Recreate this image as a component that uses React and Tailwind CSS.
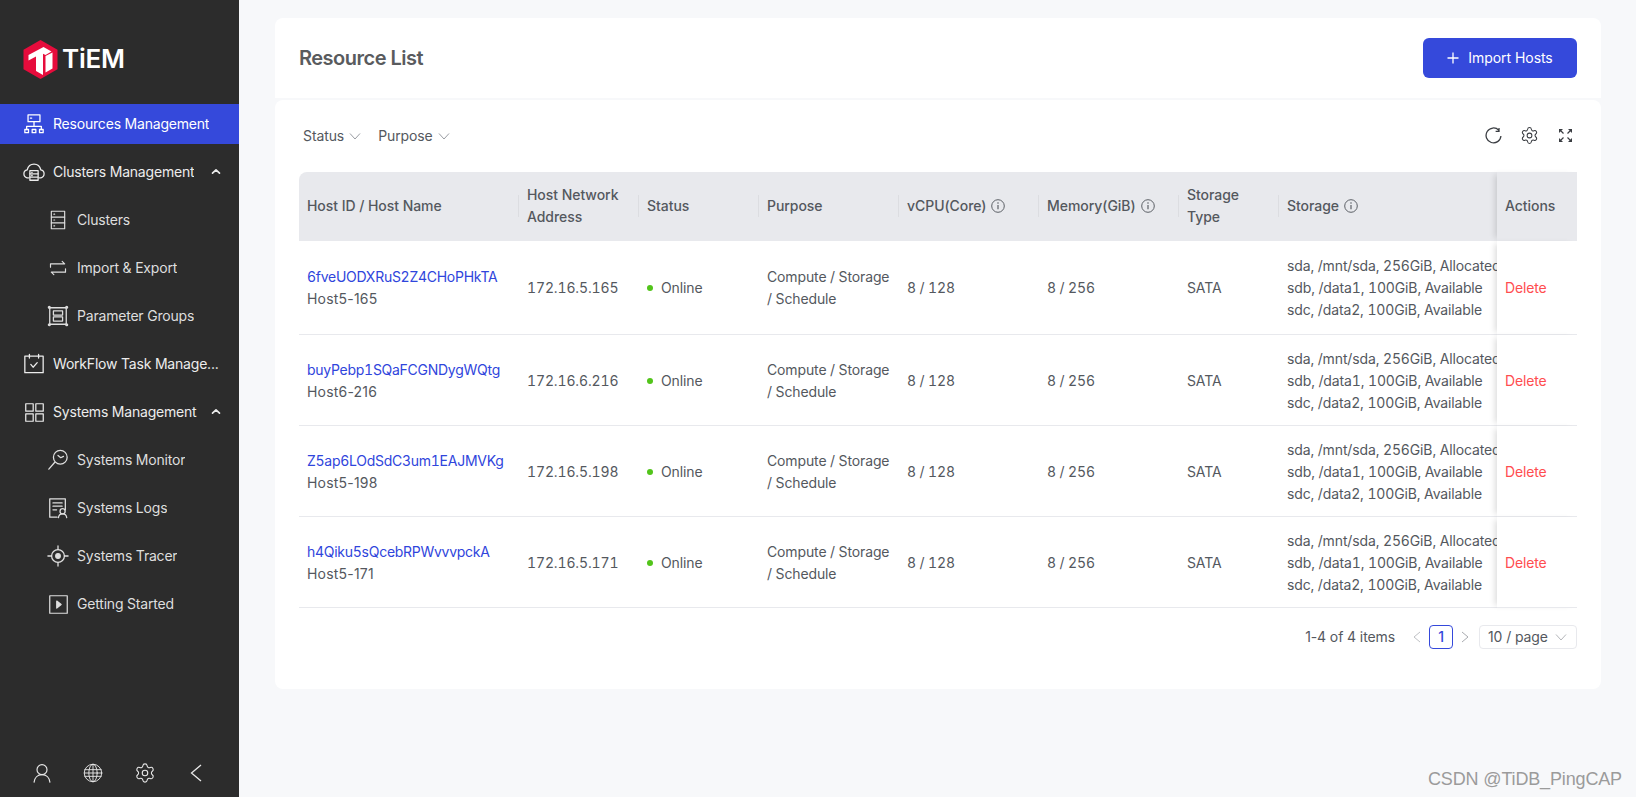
import React from "react";
import { Settings } from "lucide-react";

const S = ({ size = 20, sw = 1.4, children, className = "" }) => (
  <svg width={size} height={size} viewBox="0 0 24 24" fill="none" stroke="currentColor" strokeWidth={sw} strokeLinecap="round" strokeLinejoin="round" className={`shrink-0 ${className}`}>
    {children}
  </svg>
);

const Icons = {
  org: (
    <S size={22}>
      <rect x="5.500" y="2" width="13" height="7.500" />
      <path d="M8 5.500h1.500M12 9.500v5M4 18v-3.500h16V18" />
      <rect x="2" y="18" width="4" height="3.500" />
      <rect x="10" y="18" width="4" height="3.500" />
      <rect x="18" y="18" width="4" height="3.500" />
    </S>
  ),
  cloud: (
    <S size={22}>
      <path d="M6 18.500H4.500C2.500 18 1 16 1 14c0-2 1.500-3.800 3.500-4.200C5.500 6 8.500 3.500 12 3.500s6.500 2.500 7.500 6.300c2 .4 3.500 2.200 3.500 4.200 0 2-1.500 4-3.500 4.500H18" />
      <rect x="7.500" y="10.500" width="9" height="10.500" />
      <path d="M7.500 14h9M7.500 17.500h9M9.500 12.300h.5M9.500 15.800h.5" />
    </S>
  ),
  server: (
    <S size={20}>
      <rect x="4" y="1.500" width="16" height="21" />
      <path d="M4 8.500h16M4 15.500h16M7 5h1M7 12h1M7 19h1" />
    </S>
  ),
  swap: (
    <S size={20}>
      <path d="M3 11V7h17M17 4l3 3M21 13v4H4M7 20l-3-3" />
    </S>
  ),
  params: (
    <S size={22}>
      <rect x="3" y="3" width="18" height="18" />
      <rect x="7" y="6.500" width="10" height="4.500" />
      <rect x="7" y="13" width="10" height="4.500" />
      <circle cx="2.500" cy="2.500" r="1" />
      <circle cx="21.500" cy="2.500" r="1" />
      <circle cx="2.500" cy="21.500" r="1" />
      <circle cx="21.500" cy="21.500" r="1" />
    </S>
  ),
  cal: (
    <S size={22}>
      <rect x="2" y="3.500" width="20" height="18" />
      <path d="M7 1.500v4M17 1.500v4M8.500 12.500l2.500 3 4.500-5" />
    </S>
  ),
  apps: (
    <S size={21}>
      <rect x="2" y="2" width="8.500" height="8.500" />
      <rect x="13.500" y="2" width="8.500" height="8.500" />
      <rect x="2" y="13.500" width="8.500" height="8.500" />
      <rect x="13.500" y="13.500" width="8.500" height="8.500" />
    </S>
  ),
  monitor: (
    <S size={22}>
      <circle cx="14.500" cy="9" r="7.500" />
      <path d="M8.500 14.500L2 22M12 7l3 2.500 3-1.500" />
    </S>
  ),
  logs: (
    <S size={22}>
      <path d="M11 22H3V2h17v12" />
      <path d="M6.500 6.500h10M6.500 10h10M6.500 14h4" />
      <circle cx="17" cy="15.500" r="2.800" />
      <path d="M12.500 22.500c.3-2.500 2-4 4.500-4s4.200 1.500 4.500 4" />
    </S>
  ),
  tracer: (
    <S size={22}>
      <circle cx="12" cy="12" r="7" />
      <circle cx="12" cy="12" r="2.500" fill="currentColor" />
      <path d="M12 1v4M12 19v4M1 12h4M19 12h4" />
    </S>
  ),
  play: (
    <S size={21}>
      <rect x="2" y="2" width="20" height="20" />
      <path d="M10 8l5 4-5 4z" fill="currentColor" />
    </S>
  ),
};

const Up = () => (
  <svg width="10" height="7" viewBox="0 0 10 7" className="shrink-0">
    <path d="M1.500 5.200L5 1.800l3.500 3.400" fill="none" stroke="currentColor" strokeWidth="1.700" strokeLinecap="round" strokeLinejoin="round" />
  </svg>
);

const Down = ({ cls = "text-[#9a9da3]" }) => (
  <svg width="12" height="8" viewBox="0 0 12 8" className={`shrink-0 ${cls}`}>
    <path d="M1 1.500l5 5.500 5-5.500" fill="none" stroke="currentColor" strokeWidth="1" />
  </svg>
);

const Info = () => (
  <svg width="14" height="14" viewBox="0 0 14 14" fill="none" stroke="#5c6066" className="shrink-0">
    <circle cx="7" cy="7" r="6.300" strokeWidth="1" />
    <path d="M7 6v4.200" strokeWidth="1.200" />
    <circle cx="7" cy="4" r=".8" fill="#5c6066" stroke="none" />
  </svg>
);

const Logo = () => (
  <div className="flex items-center h-full pl-[23px]">
    <svg width="35" height="39" viewBox="0 0 34 39" className="shrink-0">
      <polygon points="17,0 34,9.800 34,29.200 17,39 0,29.200 0,9.800" fill="#e60c3c" />
      <polygon points="5,15 20,7 28,11.500 22,15 19.500,13.800 19.500,35 12.500,31 12.500,16.500 5,20.500" fill="#fff" />
      <polygon points="22,16 29,12.500 29,28.500 22,32.500" fill="#fff" />
    </svg>
    <span className="ml-[4px] text-[26px] leading-none font-semibold text-white tracking-[-0.2px]">TiEM</span>
  </div>
);

const MenuItem = ({ icon, label, active, sub, open }) => (
  <div className={`relative h-10 flex items-center text-sm tracking-[-0.2px] whitespace-nowrap ${active ? "bg-[#3549db] text-white" : sub ? "text-[#dedede]" : "text-[#ececec]"} ${sub ? "pl-12" : "pl-6"}`}>
    <span className="flex items-center justify-center w-[20px] mr-[9px]">{icon}</span>
    <span className="overflow-hidden text-ellipsis">{label}</span>
    {open && <span className="absolute left-[211px] top-[16px] leading-none"><Up /></span>}
  </div>
);

const Sidebar = () => (
  <aside className="w-[239px] shrink-0 h-full bg-[#2c2c2c] flex flex-col text-white">
    <div className="h-[104px] pt-[14px]"><Logo /></div>
    <nav className="flex flex-col gap-2">
      <MenuItem icon={Icons.org} label="Resources Management" active />
      <MenuItem icon={Icons.cloud} label="Clusters Management" open />
      <MenuItem icon={Icons.server} label="Clusters" sub />
      <MenuItem icon={Icons.swap} label="Import & Export" sub />
      <MenuItem icon={Icons.params} label="Parameter Groups" sub />
      <MenuItem icon={Icons.cal} label="WorkFlow Task Manage..." />
      <MenuItem icon={Icons.apps} label="Systems Management" open />
      <MenuItem icon={Icons.monitor} label="Systems Monitor" sub />
      <MenuItem icon={Icons.logs} label="Systems Logs" sub />
      <MenuItem icon={Icons.tracer} label="Systems Tracer" sub />
      <MenuItem icon={Icons.play} label="Getting Started" sub />
    </nav>
    <div className="mt-auto h-12 flex items-center pl-[32px] gap-[31px] text-[#e8e8e8]">
      <S size={20} sw={1.400}>
        <circle cx="12" cy="8" r="6" />
        <path d="M2.500 23c.5-5 4-9 9.500-9s9 4 9.500 9" />
      </S>
      <S size={20} sw={1.100}>
        <circle cx="12" cy="12" r="10.500" />
        <ellipse cx="12" cy="12" rx="5" ry="10.500" />
        <path d="M12 1.500v21M2.200 8h19.600M2.200 16h19.600M1.500 12h21" />
      </S>
      <Settings size={22} strokeWidth={1.200} className="shrink-0" />
      <svg width="20" height="20" viewBox="0 0 20 20" fill="none" stroke="currentColor" strokeWidth="1.300" className="shrink-0 -ml-px">
        <path d="M15 2L5.500 10l9.500 8" />
      </svg>
    </div>
  </aside>
);

const cols = [220, 120, 120, 140, 140, 140, 100, 218, 80];

const heads = [
  { t: "Host ID / Host Name" },
  { t: <>Host Network<br />Address</> },
  { t: "Status" },
  { t: "Purpose" },
  { t: "vCPU(Core)", i: true },
  { t: "Memory(GiB)", i: true },
  { t: <>Storage<br />Type</> },
  { t: "Storage", i: true },
];

const rows = [
  ["6fveUODXRuS2Z4CHoPHkTA", "Host5-165", "172.16.5.165", "h-[94px]"],
  ["buyPebp1SQaFCGNDygWQtg", "Host6-216", "172.16.6.216", "h-[91px]"],
  ["Z5ap6LOdSdC3um1EAJMVKg", "Host5-198", "172.16.5.198", "h-[91px]"],
  ["h4Qiku5sQcebRPWvvvpckA", "Host5-171", "172.16.5.171", "h-[91px]"],
];

const td = "px-2 pt-px border-b border-[#e8e9ed] align-middle tabular-nums tracking-[-0.13px]";

const Table = () => (
  <table className="w-[1278px] table-fixed border-separate border-spacing-0 text-sm leading-[22px] text-[#54585e]">
    <colgroup>
      {cols.map((w, i) => <col key={i} style={{ width: w }} />)}
    </colgroup>
    <thead>
      <tr className="h-[69px] bg-[#e8e9ed]">
        {heads.map((h, i) => (
          <th key={i} className={`relative px-2 pb-px text-left font-medium tracking-[-0.05px] text-[#54585e] ${i === 0 ? "rounded-tl-lg" : ""}`}>
            <span className="flex items-center gap-[5px]"><span>{h.t}</span>{h.i && <Info />}</span>
            {i < 7 && <span className="absolute right-0 top-[23px] h-[22px] w-px bg-[#dcdde1]" />}
          </th>
        ))}
        <th className="px-2 pb-px text-left font-medium tracking-[-0.05px] bg-[#e8e9ed] shadow-[-5px_0_6px_-3px_rgba(0,0,0,0.14)]">Actions</th>
      </tr>
    </thead>
    <tbody>
      {rows.map((r) => (
        <tr key={r[0]} className={r[3]}>
          <td className={td}>
            <div className="text-[#2f45dc] whitespace-nowrap tracking-[-0.27px]">{r[0]}</div>
            <div className="[font-variant-numeric:normal] tracking-[0.2px]">{r[1]}</div>
          </td>
          <td className={td}>{r[2]}</td>
          <td className={td}>
            <span className="flex items-center">
              <span className="w-[6px] h-[6px] rounded-full bg-[#52c41a] mr-[8px]" />
              Online
            </span>
          </td>
          <td className={td}>Compute / Storage<br />/ Schedule</td>
          <td className={td}>8 / 128</td>
          <td className={td}>8 / 256</td>
          <td className={td}>SATA</td>
          <td className={`${td} overflow-hidden whitespace-nowrap`}>
            <div>sda, /mnt/sda, 256GiB, Allocated</div>
            <div>sdb, /data1, 100GiB, Available</div>
            <div>sdc, /data2, 100GiB, Available</div>
          </td>
          <td className={`${td} bg-white text-[#ff4d4f] shadow-[-5px_0_6px_-3px_rgba(0,0,0,0.14)]`}>Delete</td>
        </tr>
      ))}
    </tbody>
  </table>
);

const Pagination = () => (
  <div className="flex items-center justify-end h-6 mt-[17px] text-sm tracking-[-0.1px] text-[#54585e]">
    <span>1-4 of 4 items</span>
    <svg width="10" height="12" viewBox="0 0 10 12" fill="none" stroke="#bfc1c5" className="ml-[17px]"><path d="M8 1L2 6l6 5" /></svg>
    <span className="ml-[7px] w-6 h-6 rounded-[4px] border border-[#3549db] text-[#3549db] font-medium flex items-center justify-center">1</span>
    <svg width="10" height="12" viewBox="0 0 10 12" fill="none" stroke="#a9abb0" className="ml-[7px]"><path d="M2 1l6 5-6 5" /></svg>
    <span className="ml-[9px] w-[98px] h-6 rounded-[4px] border border-[#e8e9ed] pl-2 flex items-center">
      10 / page
      <span className="ml-[7px]"><Down cls="text-[#b4b6ba]" /></span>
    </span>
  </div>
);

export default function App() {
  return (
    <div className="relative w-full h-screen flex overflow-hidden bg-[#f7f8fa]" style={{ fontFamily: "Inter, 'Liberation Sans', sans-serif" }}>
      <Sidebar />
      <main className="flex-1 pl-9 pr-[35px] pt-[18px]">
        <header className="h-[80px] bg-white rounded-t-lg flex items-center justify-between pl-6 pr-6">
          <h1 className="text-xl font-semibold tracking-[-0.5px] text-[#595b5e]">Resource List</h1>
          <button className="w-[154px] h-10 bg-[#3549db] rounded-md text-white text-sm tracking-[-0.05px] flex items-center justify-center">
            <svg width="12" height="12" viewBox="0 0 12 12" className="mr-[9px]" stroke="#fff" strokeWidth="1.300"><path d="M6 .5v11M.5 6h11" /></svg>
            Import Hosts
          </button>
        </header>
        <section className="mt-[2px] h-[589px] bg-white rounded-lg px-6">
          <div className="h-[72px] pb-[1px] pr-[4px] flex items-center justify-between text-sm tracking-[-0.1px] text-[#54585e]">
            <div className="flex items-center pl-1">
              <span>Status</span>
              <span className="ml-[5px]"><Down /></span>
              <span className="ml-[17px]">Purpose</span>
              <span className="ml-[5px]"><Down /></span>
            </div>
            <div className="flex items-center text-[#3a3d42]">
              <svg width="17" height="17" viewBox="0 0 16 16" fill="none" stroke="currentColor" strokeWidth="1.200"><path d="M15 8.500A7 7 0 1 1 13 3M13.200 1v3.200H10" /></svg>
              <Settings size={19} strokeWidth={1.300} className="shrink-0 ml-[18px]" />
              <svg width="15" height="15" viewBox="0 0 15 15" fill="currentColor" stroke="none" className="ml-[19px]">
                <path d="M1 1h4L1 5zM14 1v4l-4-4zM1 14v-4l4 4zM14 14h-4l4-4z" />
                <path d="M2.500 2.500l3 3M12.500 2.500l-3 3M2.500 12.500l3-3M12.500 12.500l-3-3" stroke="currentColor" strokeWidth="1.200" />
              </svg>
            </div>
          </div>
          <Table />
          <Pagination />
        </section>
      </main>
      <span className="absolute left-[1428px] top-[767px] text-[18px] leading-6 tracking-[-0.15px] text-[#9b9b9b] whitespace-nowrap" style={{ fontFamily: "'Liberation Sans', sans-serif" }}>CSDN @TiDB_PingCAP</span>
    </div>
  );
}
